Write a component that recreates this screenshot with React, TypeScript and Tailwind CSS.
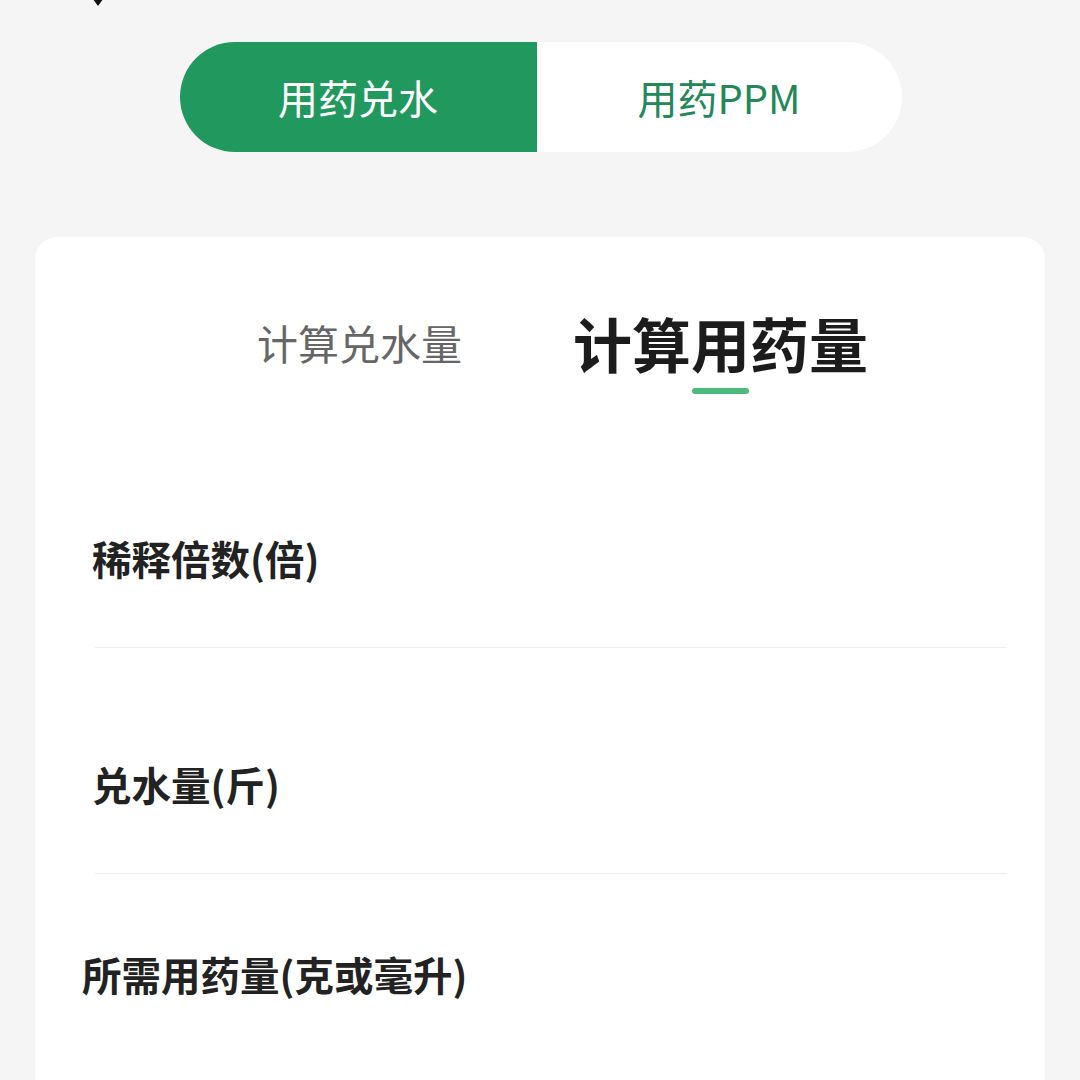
import React from "react";

const rows = [
  { label: "稀释倍数(倍)", pad: "pt-[111px] pl-[57px]" },
  { label: "兑水量(斤)", pad: "pt-[111px] pl-[57px]" },
  { label: "所需用药量(克或毫升)", pad: "pt-[75px] pl-[47px]" },
];

const App = () => {
  return (
    <div
      className="w-[1080px] h-[1080px] overflow-hidden bg-[#f5f5f5]"
      style={{ fontFamily: '"Noto Sans CJK SC", "Noto Sans", sans-serif' }}
    >
      {/* back arrow, cut off at the top */}
      <div className="h-[42px] pl-[86px]">
        <svg width="24" height="8" viewBox="0 0 24 8" className="block">
          <path d="M4 -8 L12 3 L20 -8" fill="none" stroke="#111" strokeWidth="3.5" />
        </svg>
      </div>

      {/* mode switch */}
      <div className="flex justify-center">
        <div className="flex h-[110px] w-[722px] ml-[1px]">
          <button className="w-[357px] h-full rounded-l-full bg-[#21995e] text-white text-[40px] leading-none">
            用药兑水
          </button>
          <button className="w-[365px] h-full rounded-r-full bg-white text-[#23875a] text-[40px] leading-none">
            用药PPM
          </button>
        </div>
      </div>

      {/* card */}
      <div className="mx-[35px] mt-[85px] bg-white rounded-[22px] h-[900px] pt-[65px]">
        <div className="flex justify-center">
          <div className="w-[361px] flex justify-center items-center h-[80px]">
            <span className="text-[41px] text-[#666] leading-none">计算兑水量</span>
          </div>
          <div className="w-[361px] flex flex-col items-center">
            <span className="h-[80px] flex items-center text-[59px] font-bold text-[#1c1c1c] leading-none">
              计算用药量
            </span>
            <div className="mt-[6px] w-[57px] h-[6px] rounded-full bg-[#4cba7d]" />
          </div>
        </div>

        <div className="mt-[28px]">
          {rows.map((r, i) => (
            <div key={r.label}>
              <div className={`pb-[64px] ${r.pad}`}>
                <div className="h-[50px] flex items-center text-[39.5px] font-bold text-[#222] leading-none">
                  {r.label}
                </div>
              </div>
              {i < rows.length - 1 && <div className="ml-[60px] mr-[38px] h-px bg-[#eeeeee]" />}
            </div>
          ))}
        </div>
      </div>
    </div>
  );
};

export default App;
